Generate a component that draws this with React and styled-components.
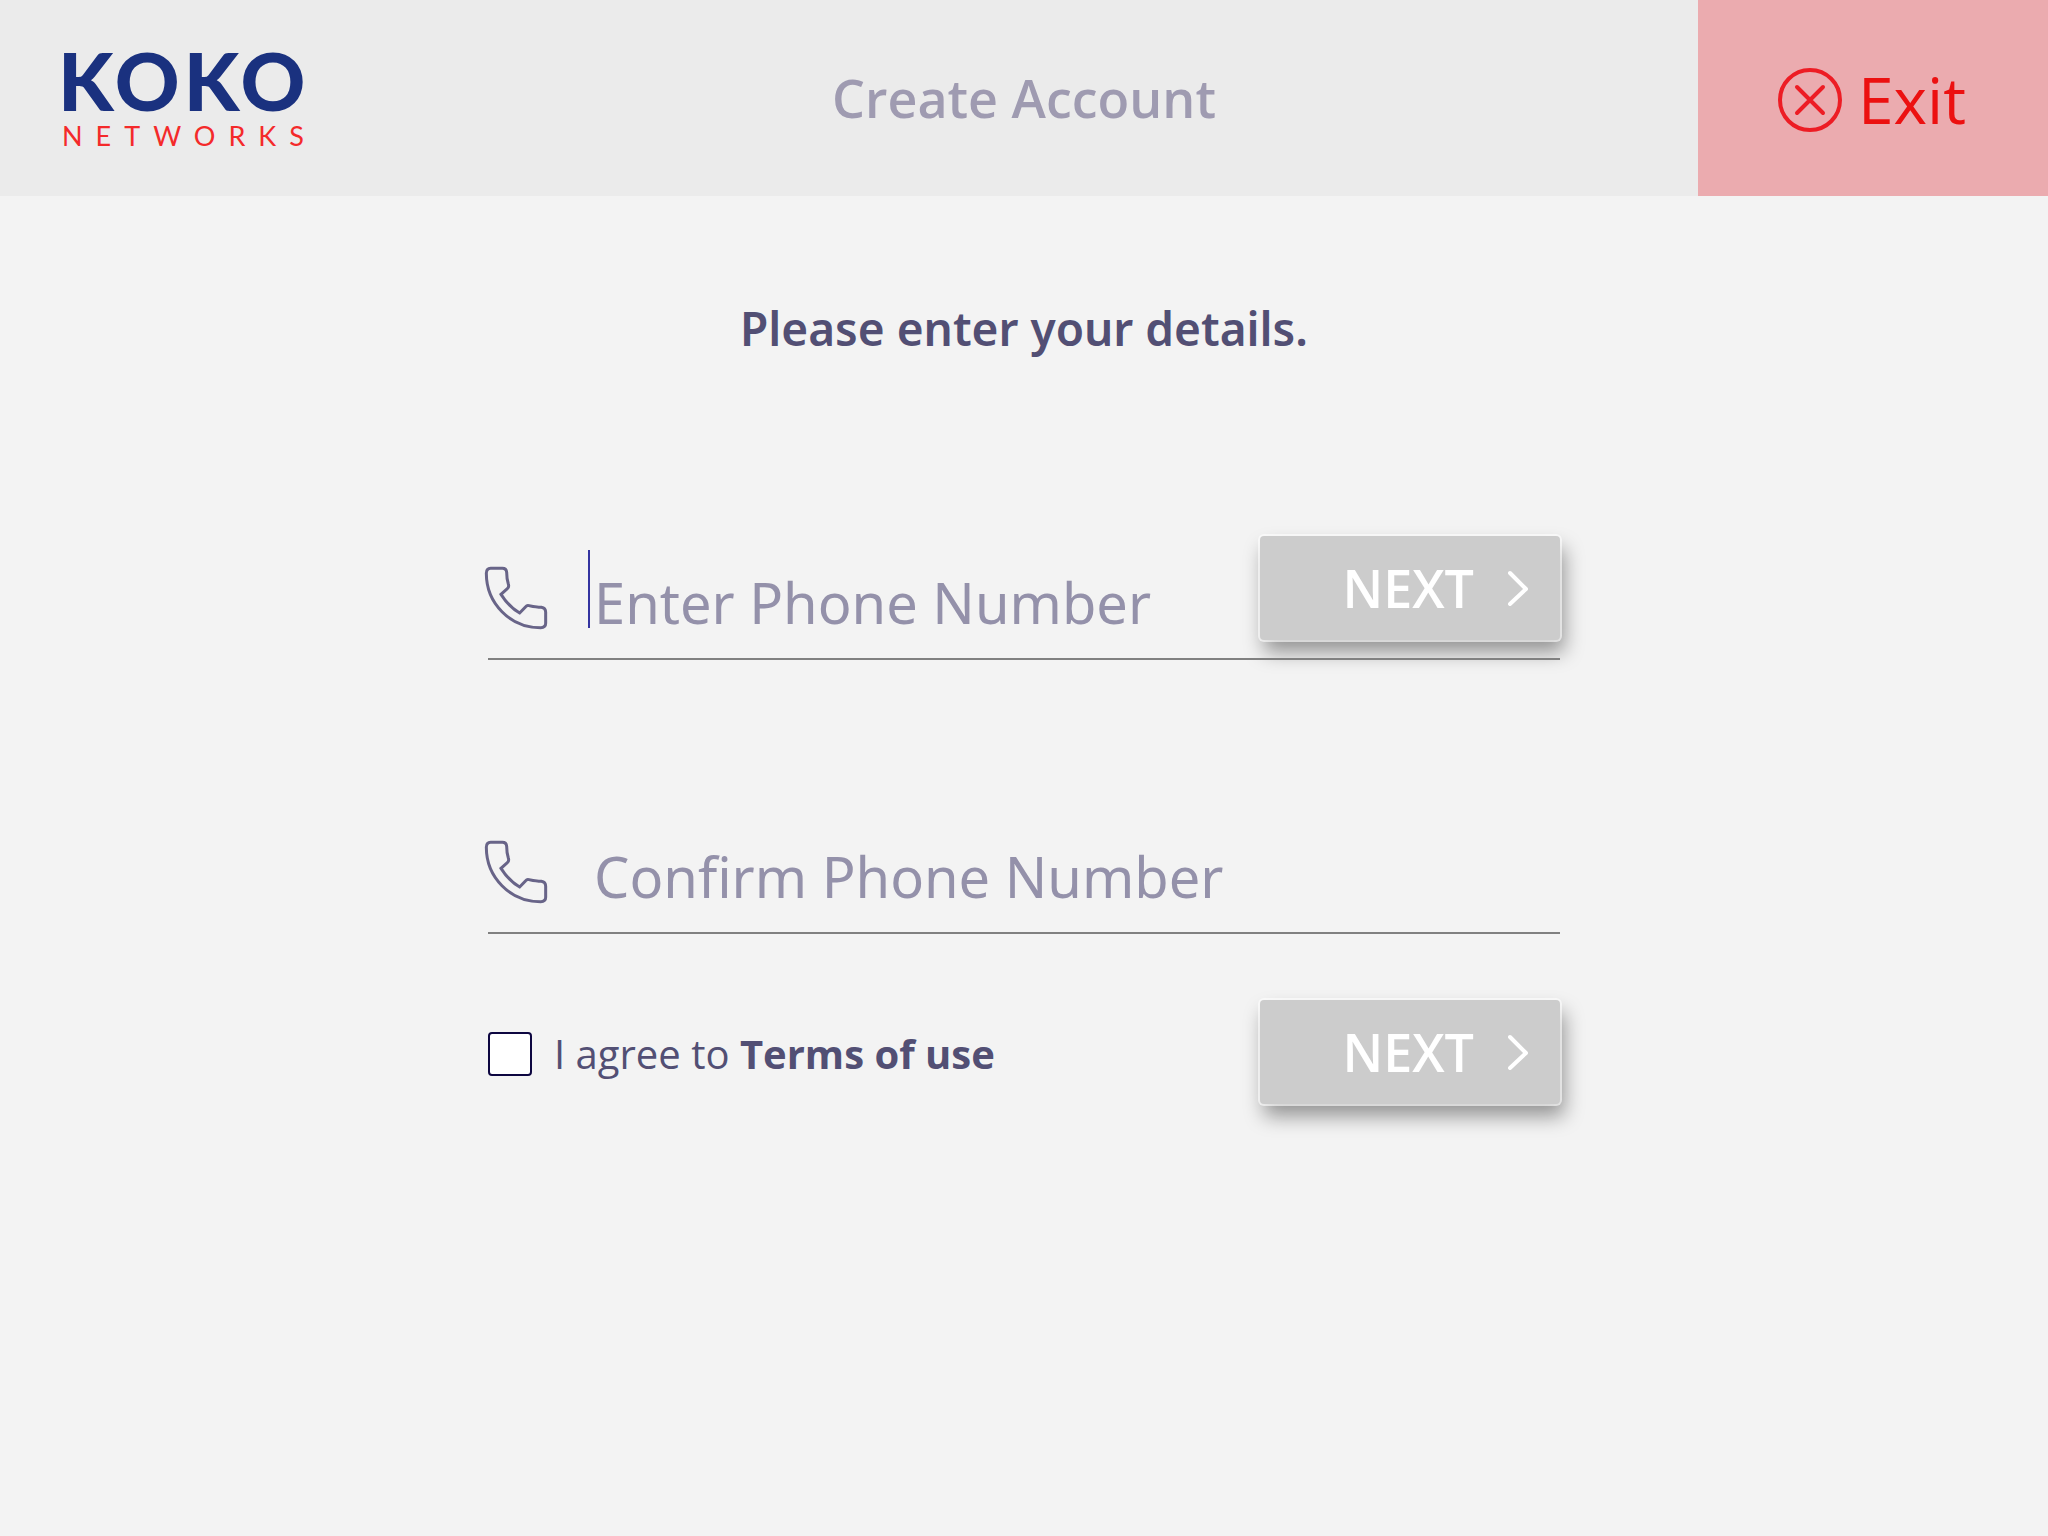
import React from "react";
import styled, { createGlobalStyle } from "styled-components";

const GlobalStyle = createGlobalStyle`
  * { box-sizing: border-box; }
  body {
    margin: 0;
    background: #f3f3f3;
    color: #524f74;
    font-family: "Open Sans", "Noto Sans", sans-serif;
  }
  button, input { font-family: inherit; }
`;

const Header = styled.header`
  display: grid;
  grid-template-columns: 350px 1fr 350px;
  align-items: center;
  height: 196px;
  background: #ebebeb;
`;

const Logo = styled.a`
  display: flex;
  flex-direction: column;
  gap: 10px;
  padding: 6px 0 0 58px;
  font-family: Lato, sans-serif;
  text-decoration: none;
  white-space: nowrap;
`;

const LogoName = styled.span`
  font-size: 80px;
  line-height: 60px;
  font-weight: 900;
  letter-spacing: 4px;
  color: #1a317f;
`;

const LogoSub = styled.span`
  padding-left: 4px;
  font-size: 27px;
  line-height: 32px;
  letter-spacing: 13px;
  color: #f42a2a;
`;

const Title = styled.h1`
  margin: 0;
  text-align: center;
  font-size: 52px;
  line-height: 72px;
  font-weight: 600;
  color: #9f9bb1;
`;

const ExitButton = styled.button`
  display: flex;
  align-items: center;
  justify-content: center;
  gap: 16px;
  height: 100%;
  padding: 4px 2px 0 0;
  border: 0;
  background: #ebabaf;
  color: #ec1010;
  font-size: 64px;
  line-height: 88px;
`;

const Main = styled.main`
  display: flex;
  flex-direction: column;
  align-items: center;
  padding: 100px 24px;
`;

const Heading = styled.h2`
  margin: 0 0 176px;
  font-family: "Noto Sans", sans-serif;
  font-size: 46px;
  line-height: 64px;
  font-weight: 600;
`;

const Form = styled.form`
  width: 100%;
  max-width: 1072px;
`;

const Field = styled.div`
  display: flex;
  flex-direction: column;
  gap: 18px;
  margin-bottom: ${(p) => p.$space}px;
`;

const FieldRow = styled.div`
  display: flex;
  align-items: flex-end;
  height: 104px;
`;

const IconLabel = styled.label`
  display: flex;
  padding: 0 38px 11px 0;
`;

const Caret = styled.span`
  width: 2px;
  height: 78px;
  margin-bottom: 12px;
  background: ${(p) => (p.$active ? "#3434a0" : "transparent")};
`;

const PhoneInput = styled.input`
  flex: 1;
  min-width: 0;
  height: 76px;
  padding: 0 0 0 4px;
  border: 0;
  outline: 0;
  background: transparent;
  color: #524f74;
  font-family: "Noto Sans", sans-serif;
  font-size: 56px;
  &::placeholder {
    color: #9491aa;
    opacity: 1;
  }
`;

const Rule = styled.hr`
  width: 100%;
  height: 2px;
  margin: 0;
  border: 0;
  background: #808080;
`;

const NextButton = styled.button`
  display: flex;
  align-items: center;
  justify-content: flex-end;
  gap: 34px;
  flex: none;
  width: 300px;
  height: 104px;
  padding: 0 32px 0 0;
  border: 0;
  border-radius: 4px;
  background: #ccc;
  box-shadow: 0 0 0 2px rgba(255, 255, 255, 0.6), 4px 12px 20px rgba(0, 0, 0, 0.4);
  color: #fff;
  font-size: 52px;
  line-height: 72px;
  font-weight: 600;
`;

const Footer = styled.div`
  display: flex;
  align-items: center;
  justify-content: space-between;
`;

const Terms = styled.div`
  display: flex;
  align-items: center;
  gap: 22px;
  padding-top: 4px;
  font-size: 40px;
  line-height: 56px;
`;

const Checkbox = styled.input`
  appearance: none;
  width: 44px;
  height: 44px;
  margin: 0;
  border: 2px solid #0d0640;
  border-radius: 4px;
  background: #fff;
  &:checked {
    background: #524f74;
  }
`;

const TermsLink = styled.a`
  color: inherit;
  font-weight: 700;
  text-decoration: none;
`;

const CloseIcon = () => (
  <svg width="64" height="64" viewBox="0 0 64 64" fill="none" stroke="#ed1c24" strokeWidth="4" strokeLinecap="round" aria-hidden="true">
    <circle cx="32" cy="32" r="30" />
    <path d="M19 19 45 45M45 19 19 45" />
  </svg>
);

const PhoneIcon = () => (
  <svg width="62" height="62" viewBox="54 111 186 186" overflow="visible" fill="none" stroke="#686488" strokeWidth="9" strokeLinejoin="miter" aria-hidden="true">
    <path d="M62 115H97Q109 115 110 127C110 142 111 149 115 162Q118 171 112 176L93 193C107 215 125 236 149 249L167 230Q171 225 177 227C189 231 201 231 214 232Q227 234 227 247V280Q227 293 212 293C120 293 49 220 49 130Q49 115 62 115Z" />
  </svg>
);

const ArrowIcon = () => (
  <svg width="20" height="36" viewBox="0 0 20 36" fill="none" stroke="#fff" strokeWidth="4" strokeLinecap="round" strokeLinejoin="round" aria-hidden="true">
    <path d="M2 3 18 19 2 34" />
  </svg>
);

const Next = () => (
  <NextButton type="button">
    NEXT
    <ArrowIcon />
  </NextButton>
);

const PhoneField = ({ id, placeholder, active, space, children }) => (
  <Field $space={space}>
    <FieldRow>
      <IconLabel htmlFor={id} aria-label={placeholder}>
        <PhoneIcon />
      </IconLabel>
      <Caret $active={active} />
      <PhoneInput id={id} type="tel" placeholder={placeholder} />
      {children}
    </FieldRow>
    <Rule />
  </Field>
);

export default function App() {
  return (
    <>
      <GlobalStyle />
      <Header>
        <Logo href="#home">
          <LogoName>KOKO</LogoName>
          <LogoSub>NETWORKS</LogoSub>
        </Logo>
        <Title>Create Account</Title>
        <ExitButton type="button">
          <CloseIcon />
          Exit
        </ExitButton>
      </Header>
      <Main>
        <Heading>Please enter your details.</Heading>
        <Form>
          <PhoneField id="phone" placeholder="Enter Phone Number" active space={150}>
            <Next />
          </PhoneField>
          <PhoneField id="confirm-phone" placeholder="Confirm Phone Number" space={66} />
          <Footer>
            <Terms>
              <Checkbox id="agree" type="checkbox" />
              <label htmlFor="agree">
                I agree to <TermsLink href="#terms">Terms of use</TermsLink>
              </label>
            </Terms>
            <Next />
          </Footer>
        </Form>
      </Main>
    </>
  );
}
